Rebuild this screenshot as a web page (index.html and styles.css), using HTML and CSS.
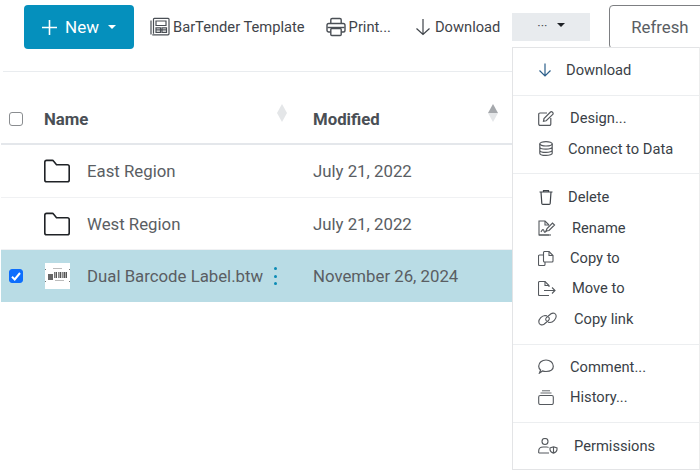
FILE: index.html
```html
<!DOCTYPE html>
<html lang="en">
<head>
<meta charset="utf-8">
<title>Files</title>
<link rel="stylesheet" href="styles.css">
</head>
<body>
<div class="page">
  <div class="toolbar">
    <button class="new-btn">
      <svg class="new-plus" width="17" height="17" viewBox="0 0 17 17"><path d="M8.5 1v15M1 8.5h15" stroke="#fff" stroke-width="1.6" fill="none"/></svg>
      <span>New</span><i class="caret caret-white"></i>
    </button>
    <a class="tool tool-template">
      <svg width="20" height="20" viewBox="0 0 20 20" fill="none" stroke="#4a4f55" stroke-width="1.2"><path d="M1 3.5v14M3.5 16.8V2.2a.8.8 0 0 1 .8-.8h13.9a.8.8 0 0 1 .8.8v14.6a1 1 0 0 1-1 1H2.3"/><path d="M6 4h10v4.500H6zM6 10.800h4.500v4.500H6zM12 10.800h4.500v4.500H12zM6 12.800h10.500"/></svg>
      <span>BarTender Template</span>
    </a>
    <a class="tool tool-print">
      <svg width="20" height="20" viewBox="0 0 20 20" fill="none" stroke="#4a4f55" stroke-width="1.400"><path d="M4.800 6.500V2.800a1.300 1.300 0 0 1 1.300-1.300h7.800a1.300 1.300 0 0 1 1.300 1.300v3.700"/><rect x="1" y="6.500" width="18" height="8.500" rx="1.800"/><path d="M1.500 10.500h17"/><rect x="4.800" y="11.500" width="10.400" height="7" rx="1" fill="#fff"/></svg>
      <span>Print...</span>
    </a>
    <a class="tool tool-download">
      <svg width="16" height="18" viewBox="0 0 16 18" fill="none" stroke="#3f444a" stroke-width="1.200"><path d="M8 1v15.500M1.500 10.500 8 16.500l6.500-6"/></svg>
      <span>Download</span>
    </a>
    <button class="more-btn"><span class="dots">···</span><i class="caret caret-dark"></i></button>
    <button class="refresh-btn">Refresh</button>
  </div>
  <div class="toolbar-rule"></div>

  <div class="table">
    <div class="row row-head">
      <span class="check-cell"><span class="box"></span></span>
      <span class="name-cell head-name">Name</span>
      <span class="sort sort-name"><i class="up"></i><i class="down"></i></span>
      <span class="date-cell head-date">Modified</span>
      <span class="sort sort-date"><i class="up on"></i><i class="down"></i></span>
    </div>
    <div class="row">
      <span class="check-cell"></span>
      <svg class="folder" width="28" height="24" viewBox="0 0 28 24" fill="none" stroke="#1f2226" stroke-width="1.600"><path d="M1.800 4v17a1.800 1.800 0 0 0 1.800 1.800h20.800a1.800 1.800 0 0 0 1.800-1.800V7.500a1.800 1.800 0 0 0-1.800-1.800H13.500L10.500 2a1.500 1.500 0 0 0-1.100-.6H3.600A1.800 1.800 0 0 0 1.800 3.200z"/></svg>
      <span class="name-cell">East Region</span>
      <span class="date-cell">July 21, 2022</span>
    </div>
    <div class="row row-tight">
      <span class="check-cell"></span>
      <svg class="folder" width="28" height="24" viewBox="0 0 28 24" fill="none" stroke="#1f2226" stroke-width="1.600"><path d="M1.800 4v17a1.800 1.800 0 0 0 1.800 1.800h20.800a1.800 1.800 0 0 0 1.800-1.800V7.500a1.800 1.800 0 0 0-1.800-1.800H13.500L10.500 2a1.500 1.500 0 0 0-1.100-.6H3.600A1.800 1.800 0 0 0 1.800 3.200z"/></svg>
      <span class="name-cell">West Region</span>
      <span class="date-cell">July 21, 2022</span>
    </div>
    <div class="row row-selected">
      <span class="check-cell">
        <span class="box box-on"><svg width="10" height="9" viewBox="0 0 10 9" fill="none" stroke="#fff" stroke-width="2"><path d="M1 4.800 3.700 7.500 9 1"/></svg></span>
      </span>
      <svg class="thumb" width="25" height="26" viewBox="0 0 25 26">
        <rect width="25" height="26" fill="#fff"/>
        <rect x="8" y="5" width="9" height="1" fill="#bbb"/>
        <rect x="3" y="11" width="5" height="6" fill="#666"/>
        <path d="M9 9h.8v6H9zM10.500 9h1.500v6h-1.500zM13 9h.7v6H13zM14.500 9h1.800v6h-1.800zM17 9h.7v6H17zM18.500 9h1.500v6h-1.500zM20.500 9h1.500v6h-1.500z" fill="#555"/>
        <rect x="10" y="17" width="9" height="1" fill="#bbb"/>
        <path d="M0 6h1v1H0zM24 6h1v1h-1zM0 18h1v1H0zM24 18h1v1h-1z" fill="#777"/>
      </svg>
      <span class="name-cell">Dual Barcode Label.btw</span>
      <span class="kebab"><i></i><i></i><i></i></span>
      <span class="date-cell">November 26, 2024</span>
    </div>
  </div>

  <div class="menu">
    <div class="group group-first">
      <div class="item"><svg class="ic ic-dl" width="14" height="14" viewBox="0 0 14 14" fill="none" stroke="#2c5f8a" stroke-width="1.200"><path d="M7 .5v12.500M1.500 7.500 7 13l5.500-5.500"/></svg><span>Download</span></div>
    </div>
    <div class="group group-short">
      <div class="item"><svg class="ic ic-design" width="16" height="15" viewBox="0 0 16 15" fill="none" stroke="#55595e" stroke-width="1.200"><path d="M9 2H2a1.300 1.300 0 0 0-1.300 1.300v9.800A1.300 1.300 0 0 0 2 14.400h9.500a1.300 1.300 0 0 0 1.300-1.300V7"/><path d="M5.500 10.200 6 7.600 12.500 1a1.200 1.200 0 0 1 1.700 0l.6.600a1.200 1.200 0 0 1 0 1.700L8.200 9.800z"/></svg><span>Design...</span></div>
      <div class="item"><svg class="ic ic-data" width="14" height="15" viewBox="0 0 14 15" fill="none" stroke="#55595e" stroke-width="1.200"><ellipse cx="7" cy="2.800" rx="6.200" ry="2.200"/><path d="M.8 2.800v9.400c0 1.200 2.800 2.200 6.200 2.200s6.200-1 6.200-2.200V2.800M.8 6c0 1.200 2.800 2.200 6.200 2.200s6.200-1 6.200-2.200M.8 9.200c0 1.200 2.800 2.200 6.200 2.200s6.200-1 6.200-2.200"/></svg><span>Connect to Data</span></div>
    </div>
    <div class="group group-wide">
      <div class="item"><svg class="ic ic-delete" width="14" height="15" viewBox="0 0 14 15" fill="none" stroke="#3f444a" stroke-width="1.200"><path d="M.5 2h13M4.500 2V.7h5V2M2 2l.8 11.400a1 1 0 0 0 1 .9h6.400a1 1 0 0 0 1-.9L12 2"/></svg><span>Delete</span></div>
      <div class="item"><svg class="ic ic-rename" width="18" height="16" viewBox="0 0 18 16" fill="none" stroke="#55595e" stroke-width="1.100"><path d="M11 15H1V1h6l4 4"/><path d="M7 1v4h4"/><path d="M3 12c1.500-3 2.500-3 3-1s1.500 1 2.500 0"/><path d="m8 11 1-2.500L14.500 3l2 2L11 10.500z" stroke-width="1.200"/><path d="M1 15h12"/></svg><span>Rename</span></div>
      <div class="item"><svg class="ic ic-copy" width="16" height="15" viewBox="0 0 16 15" fill="none" stroke="#55595e" stroke-width="1.100"><path d="M5 4H1.500a1 1 0 0 0-1 1v8.500a1 1 0 0 0 1 1h4.500a1 1 0 0 0 1-1V11"/><path d="M5.500 10V1.500a1 1 0 0 1 1-1H11L15 4.500V10a1 1 0 0 1-1 1H6.500a1 1 0 0 1-1-1z"/><path d="M11 .5v4h4"/></svg><span>Copy to</span></div>
      <div class="item"><svg class="ic ic-move" width="18" height="15" viewBox="0 0 18 15" fill="none" stroke="#55595e" stroke-width="1.100"><path d="M11 14.500H1.500a1 1 0 0 1-1-1V1.500a1 1 0 0 1 1-1H7L11 4.500V6"/><path d="M7 .5v4h4M6 9.500h11M14 6.500l3 3-3 3"/></svg><span>Move to</span></div>
      <div class="item"><svg class="ic ic-link" width="19" height="14" viewBox="0 0 19 14" fill="none" stroke="#55595e" stroke-width="1.100"><path d="M9 3.800 7 3.500C4 3.700.7 7 .8 10c.2 3 3.300 3.500 5.200 2.200L10.500 8.500c1.200-1.400 1-2.800-.2-3.500"/><path d="M10 10.200l2 .3c3-.2 6.300-3.500 6.200-6.500-.2-3-3.300-3.500-5.200-2.200L8.500 5.500c-1.200 1.400-1 2.800.2 3.500"/></svg><span>Copy link</span></div>
    </div>
    <div class="group">
      <div class="item"><svg class="ic ic-comment" width="16" height="15" viewBox="0 0 16 15" fill="none" stroke="#55595e" stroke-width="1.200"><path d="M1.500 14 2.600 11C1.300 10 .7 8.800.7 7.300.7 3.700 4 1 8 1s7.300 2.700 7.300 6.300-3.300 5.200-7.300 5.200c-1.300 0-2.600-.2-3.500-.6z"/></svg><span>Comment...</span></div>
      <div class="item"><svg class="ic ic-history" width="16" height="15" viewBox="0 0 16 15" fill="none" stroke="#55595e" stroke-width="1.100"><rect x=".7" y="5.500" width="14.600" height="9" rx="1.500"/><path d="M2.500 3h11M4 .8h8" stroke-width=".9"/></svg><span>History...</span></div>
    </div>
    <div class="group">
      <div class="item"><svg class="ic ic-perm" width="20" height="16" viewBox="0 0 20 16" fill="none" stroke="#55595e" stroke-width="1.100"><circle cx="7" cy="3.500" r="3"/><path d="M.7 15v-2c0-2.500 2-4 4.500-4h3.500c.8 0 1.500.1 2 .4M.7 15H11"/><path d="M15.500 8.800l3.500 1.200v1.500c0 1.800-1.500 3-3.500 3.600-2-.6-3.500-1.800-3.500-3.600V10zM15.500 9v6"/></svg><span>Permissions</span></div>
    </div>
  </div>
</div>
</body>
</html>
```

FILE: styles.css
```css
* { box-sizing: border-box; }
html, body { margin: 0; padding: 0; }
body {
  width: 700px;
  height: 470px;
  overflow: hidden;
  background: #fff;
  font-family: Roboto, "Liberation Sans", sans-serif;
  color: #4a4f55;
}
.page { position: relative; width: 700px; height: 470px; overflow: hidden; }

.toolbar {
  display: flex;
  align-items: flex-start;
  height: 71px;
  padding: 5px 0 0 24px;
}
button { font-family: inherit; cursor: pointer; }
.new-btn {
  display: flex;
  flex: none;
  align-items: center;
  width: 110px;
  height: 44px;
  padding: 0 0 0 17px;
  border: 0;
  border-radius: 4px;
  background: #0590bd;
  color: #fff;
  font-size: 17px;
}
.new-btn span { margin-left: 7px; }
.caret {
  display: inline-block;
  width: 0;
  height: 0;
  border-left: 4.500px solid transparent;
  border-right: 4.500px solid transparent;
  border-top: 4.500px solid currentColor;
}
.caret-white { margin-left: 9px; color: #fff; }
.caret-dark { margin-left: 10px; color: #1f2226; }

.tool {
  display: flex;
  flex: none;
  align-items: center;
  height: 44px;
  font-size: 14.700px;
  color: #3f444a;
  white-space: nowrap;
}
.tool-template { margin-left: 16px; gap: 3px; }
.tool-print { margin-left: 21px; gap: 3px; }
.tool-download { margin-left: 24px; gap: 4px; }

.more-btn {
  display: flex;
  flex: none;
  align-items: center;
  justify-content: center;
  width: 78px;
  height: 28px;
  margin: 8px 0 0 12px;
  padding: 0 0 4px;
  border: 0;
  background: #e8ebee;
  color: #4a4f55;
  font-size: 13px;
}
.refresh-btn {
  flex: none;
  width: 101px;
  height: 44px;
  margin-left: 19px;
  padding: 0;
  border: 1px solid #7d7f82;
  border-radius: 4px;
  background: #fff;
  color: #5a5e63;
  font-size: 16.800px;
}
.toolbar-rule { height: 1px; margin-left: 3px; background: #e9ecef; }

.table { padding-top: 21px; }
.row {
  position: relative;
  display: flex;
  align-items: center;
  height: 53px;
  margin-left: 1px;
  border-bottom: 1px solid #f0f1f3;
  font-size: 16.800px;
  color: #5a5e63;
}
.row-head { height: 52px; padding-top: 1px; border-bottom: 2px solid #e4e7eb; }
.row-tight { height: 52px; }
.row-selected { height: 52px; background: #b9dce5; border-bottom: 0; }
.check-cell { display: flex; align-items: center; width: 43px; padding-left: 8px; flex: none; }
.box {
  display: flex;
  align-items: center;
  justify-content: center;
  width: 14px;
  height: 14px;
  border: 1.500px solid #8a8d90;
  border-radius: 3px;
  background: #fff;
}
.box-on { background: #0d6efd; border-color: #0d6efd; }
.head-name { font-weight: 700; color: #4a4f55; }
.head-date { font-weight: 700; color: #4a4f55; }
.folder { flex: none; margin-left: -1px; margin-right: 1px; }
.thumb { flex: none; margin-left: 1px; }
.name-cell { margin-left: 15px; white-space: nowrap; }
.row-head .name-cell { margin-left: 0; }
.row-selected .name-cell { margin-left: 17px; }
.date-cell { position: absolute; left: 312px; white-space: nowrap; }
.sort { position: absolute; top: 11px; display: flex; flex-direction: column; }
.sort-name { left: 276px; }
.sort-date { left: 487px; }
.sort i {
  width: 0;
  height: 0;
  border-left: 5px solid transparent;
  border-right: 5px solid transparent;
}
.sort .up { border-bottom: 9px solid #e4e6e8; }
.sort .down { border-top: 9px solid #e4e6e8; }
.sort .up.on { border-bottom-color: #a5a8ac; }
.kebab { display: flex; flex-direction: column; gap: 4.500px; margin-left: 11px; }
.kebab i { width: 3px; height: 3px; border-radius: 50%; background: #0b8bb5; }

.menu {
  position: absolute;
  left: 512px;
  top: 47px;
  width: 188px;
  height: 423px;
  background: #fff;
  border: 1px solid #e3e4e6;
  border-right-color: #eceded;
  color: #3a3f47;
  font-size: 14.700px;
}
.group { padding: 7px 0 10px; border-top: 1px solid #eceef0; }
.group-short { padding-bottom: 9.400px; }
.group-wide { padding-top: 8px; }
.group-first { border-top: 0; }
.item { display: flex; align-items: center; height: 30.300px; padding-left: 25px; white-space: nowrap; }
.ic { flex: none; }
.ic-dl { margin-right: 14px; }
.ic-design { margin-right: 16px; }
.ic-data { margin-right: 15px; margin-left: 1px; }
.ic-delete { margin-right: 15px; margin-left: 1px; }
.ic-rename { margin-right: 16px; }
.ic-copy { margin-right: 16px; }
.ic-move { margin-right: 16px; }
.ic-link { margin-right: 17px; }
.ic-comment { margin-right: 16px; }
.ic-history { margin-right: 16px; }
.ic-perm { margin-right: 16px; }
```
